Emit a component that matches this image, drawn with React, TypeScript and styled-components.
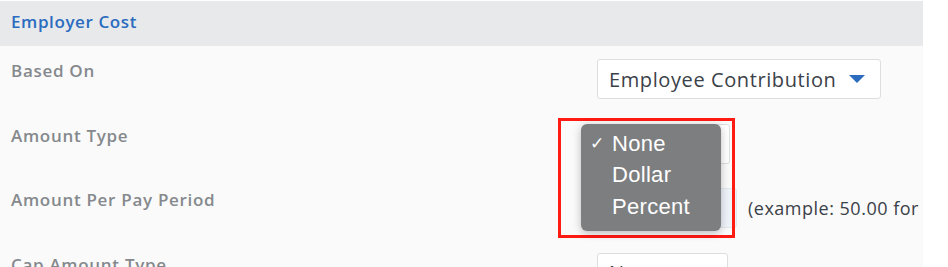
import React from 'react';
import styled, { createGlobalStyle } from 'styled-components';

const GlobalStyle = createGlobalStyle`
  html, body {
    margin: 0;
    padding: 0;
    background: #ffffff;
  }
  body {
    font-family: 'Open Sans', 'Liberation Sans', sans-serif;
  }
`;

const Panel = styled.div`
  position: relative;
  width: 923px;
  height: 267px;
  overflow: hidden;
  background: #fafafa;
`;

const Header = styled.div`
  height: 46px;
  display: flex;
  align-items: center;
  padding-left: 11px;
  padding-bottom: 4px;
  box-sizing: border-box;
  background: #e8e9eb;
  color: #2b6cbf;
  font-size: 17px;
  font-weight: 600;
  letter-spacing: 0.6px;
  border-top: 1px solid #ffffff;
`;

const Row = styled.div`
  display: grid;
  grid-template-columns: 597px 1fr;
  height: 64.5px;
`;

const Label = styled.div`
  padding: 14px 0 0 11px;
  color: #85898d;
  font-size: 17px;
  font-weight: 600;
  letter-spacing: 0.7px;
  line-height: 22px;
`;

const Controls = styled.div`
  display: flex;
  align-items: center;
  gap: 11px;
  align-self: start;
  margin-top: 13px;
`;

const SelectBox = styled.div<{ $width: number }>`
  width: ${(p) => p.$width}px;
  height: 40px;
  box-sizing: border-box;
  display: flex;
  align-items: center;
  justify-content: space-between;
  padding: 0 15px 0 11px;
  background: #ffffff;
  border: 1px solid #dcdee0;
  border-radius: 3px;
  color: #3b4148;
  font-size: 20px;
  letter-spacing: 0.6px;
  white-space: nowrap;
`;

const InputBox = styled.div`
  width: 140px;
  height: 40px;
  box-sizing: border-box;
  background: #eef3fa;
  border: 1px solid #e2e8f0;
  border-radius: 3px;
`;

const Hint = styled.span`
  color: #3b4148;
  font-size: 18px;
  letter-spacing: 0.5px;
  white-space: nowrap;
`;

const Caret = styled.span`
  width: 0;
  height: 0;
  border-left: 8px solid transparent;
  border-right: 8px solid transparent;
  border-top: 8px solid #2b6cbf;
`;

const Highlight = styled.div`
  position: absolute;
  left: 558px;
  top: 118px;
  width: 177px;
  height: 120px;
  box-sizing: border-box;
  border: 3px solid #ff1a12;
`;

const Menu = styled.ul`
  position: absolute;
  left: 581px;
  top: 124px;
  width: 140px;
  height: 107px;
  box-sizing: border-box;
  margin: 0;
  padding: 4px 0 0 0;
  list-style: none;
  background: #7d7e80;
  border-radius: 6px;
  box-shadow: 0 2px 8px rgba(0, 0, 0, 0.25);
  color: #ffffff;
  font-family: 'Liberation Sans', Arial, sans-serif;
  font-size: 22px;
  letter-spacing: 0.3px;
`;

const MenuItem = styled.li`
  display: flex;
  align-items: center;
  height: 31.5px;
  padding-left: 31px;
  position: relative;
`;

const Check = styled.span`
  position: absolute;
  left: 9px;
  font-size: 17px;
`;

export default function App() {
  return (
    <>
      <GlobalStyle />
      <Panel>
        <Header>Employer Cost</Header>
        <Row>
          <Label>Based On</Label>
          <Controls>
            <SelectBox $width={284}>
              Employee Contribution
              <Caret />
            </SelectBox>
          </Controls>
        </Row>
        <Row>
          <Label>Amount Type</Label>
          <Controls>
            <SelectBox $width={133}>None</SelectBox>
          </Controls>
        </Row>
        <Row>
          <Label>Amount Per Pay Period</Label>
          <Controls>
            <InputBox />
            <Hint>(example: 50.00 for</Hint>
          </Controls>
        </Row>
        <Row>
          <Label>Cap Amount Type</Label>
          <Controls>
            <SelectBox $width={131}>None</SelectBox>
          </Controls>
        </Row>
        <Highlight />
        <Menu>
          <MenuItem>
            <Check>✓</Check>None
          </MenuItem>
          <MenuItem>Dollar</MenuItem>
          <MenuItem>Percent</MenuItem>
        </Menu>
      </Panel>
    </>
  );
}
